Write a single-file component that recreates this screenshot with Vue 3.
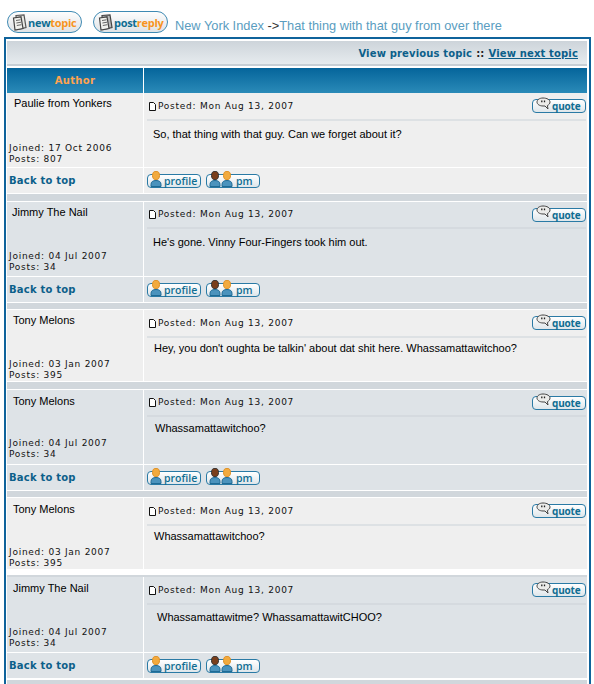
<template>
  <div class="page">
    <div class="top">
      <a class="big-btn">
        <svg class="doc-icon" width="15" height="17" viewBox="0 0 15 17">
          <path d="M4 1.500 L12 1 L14 13.500 L5 15.500 Z" fill="#e8e8e4" stroke="#555" stroke-width="1.200" />
          <path d="M1.500 4 L9 2.800 L11 14.500 L3 16 Z" fill="#f2f2ee" stroke="#444" stroke-width="1.200" />
          <path d="M4 6.500 L8.500 5.800 M4.400 9 L9 8.200 M4.800 11.500 L9.400 10.700" stroke="#666" stroke-width="1" />
        </svg>
        <span class="w1">new</span><span class="w2">topic</span>
      </a>
      <a class="big-btn reply">
        <svg class="doc-icon" width="15" height="17" viewBox="0 0 15 17">
          <path d="M4 1.500 L12 1 L14 13.500 L5 15.500 Z" fill="#bbb" stroke="#444" stroke-width="1.200" />
          <path d="M1.500 4 L9 2.800 L11 14.500 L3 16 Z" fill="#f2f2ee" stroke="#444" stroke-width="1.200" />
          <path d="M4 6.500 L8.500 5.800 M4.400 9 L9 8.200 M4.800 11.500 L9.400 10.700" stroke="#666" stroke-width="1" />
        </svg>
        <span class="w1">post</span><span class="w2">reply</span>
      </a>
      <div class="crumbs">
        <a>New York Index</a> <span class="arrow">-&gt;</span><a>That thing with that guy from over there</a>
      </div>
    </div>

    <div class="forum">
      <div class="nav-bar">
        <span>View previous topic</span>
        <span class="sep-colons">::</span>
        <u>View next topic</u>
      </div>
      <div class="head-row">
        <div class="head-cell">Author</div>
        <div class="head-cell"></div>
      </div>

      <template v-for="(p, i) in posts" :key="i">
        <div class="post" :class="{ alt: p.alt }">
          <div class="author" :style="{ height: p.h + 'px', paddingBottom: p.metaY + 'px', paddingTop: p.nameY + 'px' }">
            <div class="name" :style="{ paddingLeft: p.nameX + 'px' }">{{ p.name }}</div>
            <div class="meta">Joined: {{ p.joined }}<br />Posts: {{ p.count }}</div>
          </div>
          <div class="body" :style="{ height: p.h + 'px' }">
            <div class="post-head" :style="{ height: p.headH + 'px' }">
              <svg class="mini" width="7" height="9" viewBox="0 0 7 9">
                <path d="M.5.5h4l2 2v6h-6z" fill="#fff" stroke="#111" />
              </svg>
              <span class="meta">Posted: Mon Aug 13, 2007</span>
              <a class="small-btn quote">
                <svg class="bubble" width="15" height="13" viewBox="0 0 15 13">
                  <path d="M7 1C3.500 1 1 2.800 1 5s2.500 4 6 4h2l3 3-.6-3.500C13 7.800 14 6.500 14 5c0-2.200-3-4-7-4z" fill="#ececea" stroke="#444" />
                  <path d="M5.800 3.500v1.800M8.500 3.500v1.800" stroke="#222" stroke-width="1.300" />
                </svg>
                <span>quote</span>
              </a>
            </div>
            <div class="message" :style="{ paddingLeft: p.bodyX + 'px', paddingTop: p.bodyY + 'px' }">{{ p.text }}</div>
          </div>
        </div>
        <div v-if="p.links" class="post links" :class="{ alt: p.alt }">
          <div class="author back">Back to top</div>
          <div class="body btns">
            <a class="small-btn profile">
              <svg class="person" width="12" height="16" viewBox="0 0 12 16">
                <ellipse cx="6" cy="4.500" rx="3.500" ry="4.200" fill="#f2aa3e" stroke="#dd8f24" />
                <path d="M1 15.500v-2q0-4 5-4t5 4v2z" fill="#4b93bd" stroke="#1f6a94" />
              </svg>
              <span>profile</span>
            </a>
            <a class="small-btn pm">
              <svg class="person two" width="25" height="16" viewBox="0 0 25 16">
                <ellipse cx="6" cy="4.500" rx="3.500" ry="4.200" fill="#7a3f1c" stroke="#333" />
                <path d="M1 15.500v-2q0-4 5-4t5 4v2z" fill="#4b93bd" stroke="#1f6a94" />
                <ellipse cx="18" cy="4.500" rx="3.500" ry="4.200" fill="#f2aa3e" stroke="#dd8f24" />
                <path d="M13 15.500v-2q0-4 5-4t5 4v2z" fill="#4b93bd" stroke="#1f6a94" />
              </svg>
              <span>pm</span>
            </a>
          </div>
        </div>
        <div class="divider" :style="{ height: p.sep + 'px', marginTop: p.sepTop + 'px', marginBottom: p.sepBottom + 'px' }"></div>
      </template>
    </div>
  </div>
</template>

<script setup>
const posts = [
  { name: "Paulie from Yonkers", joined: "17 Oct 2006", count: 807, text: "So, that thing with that guy. Can we forget about it?", nameX: 5, nameY: 3, bodyX: 6, bodyY: 6, metaY: 2.5, h: 74, headH: 28, links: true, alt: false, sep: 7, sepTop: 1, sepBottom: 1 },
  { name: "Jimmy The Nail", joined: "04 Jul 2007", count: 34, text: "He's gone. Vinny Four-Fingers took him out.", nameX: 3, nameY: 3, bodyX: 6, bodyY: 6, metaY: 3.5, h: 74, headH: 27, links: true, alt: true, sep: 6, sepTop: 1, sepBottom: 1 },
  { name: "Tony Melons", joined: "03 Jan 2007", count: 395, text: "Hey, you don't oughta be talkin' about dat shit here. Whassamattawitchoo?", nameX: 4, nameY: 3, bodyX: 7, bodyY: 3, metaY: 0, h: 71, headH: 28, links: false, alt: false, sep: 7, sepTop: 1, sepBottom: 1 },
  { name: "Tony Melons", joined: "04 Jul 2007", count: 34, text: "Whassamattawitchoo?", nameX: 4, nameY: 4, bodyX: 8, bodyY: 4, metaY: 4, h: 74, headH: 27, links: true, alt: true, sep: 6, sepTop: 1, sepBottom: 1 },
  { name: "Tony Melons", joined: "03 Jan 2007", count: 395, text: "Whassamattawitchoo?", nameX: 4, nameY: 3.5, bodyX: 7, bodyY: 3, metaY: 0, h: 71, headH: 28, links: false, alt: false, sep: 2, sepTop: 6, sepBottom: 0 },
  { name: "Jimmy The Nail", joined: "04 Jul 2007", count: 34, text: "Whassamattawitme? WhassamattawitCHOO?", nameX: 4, nameY: 4, bodyX: 10, bodyY: 5, metaY: 3, h: 75, headH: 28, links: true, alt: true, sep: 6, sepTop: 2, sepBottom: 0 },
];
</script>

<style>
html,
body {
  margin: 0;
  background: #fff;
  overflow: hidden;
}
</style>

<style scoped>
.page {
  width: 594px;
  height: 684px;
  overflow: hidden;
  font-family: "Liberation Sans", Arial, sans-serif;
  color: #000;
}

.top {
  display: flex;
  align-items: flex-start;
  padding: 11px 0 0 7px;
  height: 26px;
}

.big-btn {
  display: flex;
  align-items: center;
  box-sizing: border-box;
  width: 75px;
  height: 22px;
  margin-right: 11px;
  padding-left: 4px;
  border: 1px solid #3f8ab3;
  border-radius: 11px;
  background: linear-gradient(#fdfdfd, #dfe3e6);
  font-family: "Open Sans", sans-serif;
  font-size: 11px;
  font-weight: 700;
  letter-spacing: -0.3px;
}

.big-btn.reply {
  margin-right: 7px;
}

.doc-icon {
  margin-right: 1px;
  flex: none;
}

.w1 {
  color: #0f6d92;
}

.w2 {
  color: #f7941e;
}

.crumbs {
  margin-top: 7px;
  font-size: 12.800px;
  line-height: 16px;
  color: #5a9dbf;
  white-space: nowrap;
}

.arrow {
  color: #333;
}

.forum {
  box-sizing: border-box;
  width: 587px;
  height: 700px;
  margin-left: 4px;
  padding: 2px 2px 0 1px;
  border: 2px solid #0f639b;
  border-bottom: 0;
  background: #fff;
}

.nav-bar {
  display: flex;
  justify-content: flex-end;
  align-items: center;
  gap: 4px;
  box-sizing: border-box;
  height: 25px;
  padding: 2px 9px 0 0;
  border-bottom: 2px solid #c7cfd5;
  background: linear-gradient(#cdd4da, #e6ebee);
  font-family: "DejaVu Sans", sans-serif;
  font-size: 10px;
  font-weight: 700;
  letter-spacing: 0.15px;
  color: #0c5f8a;
}

.sep-colons {
  color: #222;
}

.head-row {
  display: grid;
  grid-template-columns: 136px 1fr;
  column-gap: 1px;
  margin-top: 2px;
}

.head-cell {
  height: 25px;
  line-height: 25px;
  text-align: center;
  background: linear-gradient(#05659b, #2a8ab8);
  font-family: "DejaVu Sans", sans-serif;
  font-size: 10px;
  font-weight: 700;
  letter-spacing: 0.3px;
  color: #ffa34f;
}

.post {
  display: grid;
  grid-template-columns: 136px 1fr;
  column-gap: 1px;
}

.post.links {
  margin-top: 1px;
}

.author,
.body {
  background: #efefef;
  box-sizing: border-box;
}

.alt .author,
.alt .body {
  background: #dee3e7;
}

.author {
  display: flex;
  flex-direction: column;
  justify-content: space-between;
  padding-left: 2px;
}

.name {
  font-size: 11px;
  line-height: 14px;
}

.meta {
  font-family: "DejaVu Sans", sans-serif;
  font-size: 9px;
  line-height: 11px;
  letter-spacing: 0.74px;
  color: #111;
}

.body {
  display: flex;
  flex-direction: column;
  padding: 0 1px 0 3px;
}

.post-head {
  display: flex;
  align-items: center;
  box-sizing: border-box;
  flex: none;
  padding-left: 2px;
  border-bottom: 2px solid #dde1e4;
}

.alt .post-head {
  border-bottom-color: #d5dadf;
}

.mini {
  margin-right: 2px;
  flex: none;
}

.message {
  font-size: 11px;
  line-height: 14px;
}

.small-btn {
  display: flex;
  align-items: center;
  box-sizing: border-box;
  width: 54px;
  height: 14px;
  border: 1px solid #2a7aa5;
  border-radius: 4px;
  background: linear-gradient(#fff, #dfe6ea);
  font-family: "Open Sans", sans-serif;
  font-size: 10.500px;
  font-weight: 600;
  line-height: 12px;
  color: #0f6d92;
}

.quote {
  margin-left: auto;
  padding-left: 3px;
  font-size: 10px;
  font-weight: 700;
  letter-spacing: -0.2px;
}

.bubble {
  margin: -6px 1px 0 0;
  flex: none;
}

.author.back {
  display: block;
  height: 25px;
  padding: 0 0 0 2px;
  line-height: 26px;
  font-family: "DejaVu Sans", sans-serif;
  font-size: 10px;
  font-weight: 700;
  letter-spacing: 0.2px;
  color: #0c5f8a;
}

.btns {
  flex-direction: row;
  align-items: center;
  gap: 5px;
  height: 25px;
  padding-top: 1px;
}

.person {
  margin: -5px 2px 0 2px;
  flex: none;
}

.divider {
  background: #d1d7dc;
}
</style>
